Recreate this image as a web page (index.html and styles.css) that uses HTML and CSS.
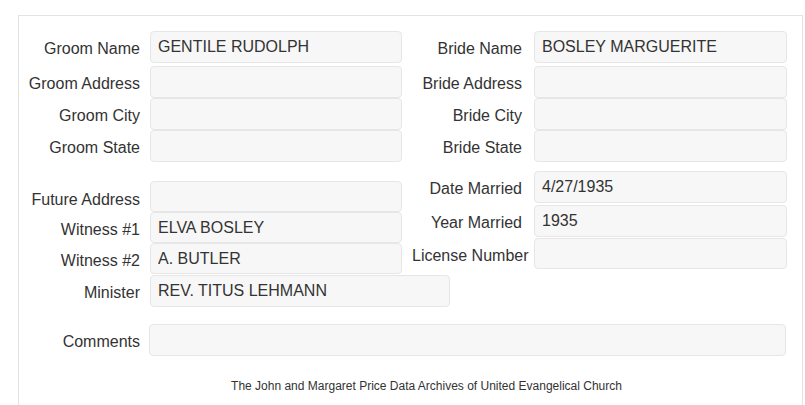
FILE: index.html
```html
<!DOCTYPE html>
<html lang="en">
<head>
    <meta charset="UTF-8">
    <title>Marriage Record</title>
    <link rel="stylesheet" href="styles.css">
</head>
<body>
    <div class="panel">
        <div class="top-grid">
            <div class="field first">
                <label for="groomName">Groom Name</label>
                <input type="text" id="groomName" value="GENTILE RUDOLPH" readonly>
            </div>
            <div class="field first right">
                <label for="brideName">Bride Name</label>
                <input type="text" id="brideName" value="BOSLEY MARGUERITE" readonly>
            </div>
            <div class="field">
                <label for="groomAddress">Groom Address</label>
                <input type="text" id="groomAddress" value="" readonly>
            </div>
            <div class="field right">
                <label for="brideAddress">Bride Address</label>
                <input type="text" id="brideAddress" value="" readonly>
            </div>
            <div class="field">
                <label for="groomCity">Groom City</label>
                <input type="text" id="groomCity" value="" readonly>
            </div>
            <div class="field right">
                <label for="brideCity">Bride City</label>
                <input type="text" id="brideCity" value="" readonly>
            </div>
            <div class="field">
                <label for="groomState">Groom State</label>
                <input type="text" id="groomState" value="" readonly>
            </div>
            <div class="field right">
                <label for="brideState">Bride State</label>
                <input type="text" id="brideState" value="" readonly>
            </div>
        </div>

        <div class="bottom-grid">
            <div class="left-col">
                <div class="field short">
                    <label for="futureAddress" class="low">Future Address</label>
                    <input type="text" id="futureAddress" value="" readonly>
                </div>
                <div class="field short">
                    <label for="witness1">Witness #1</label>
                    <input type="text" id="witness1" value="ELVA BOSLEY" readonly>
                </div>
                <div class="field short">
                    <label for="witness2">Witness #2</label>
                    <input type="text" id="witness2" value="A. BUTLER" readonly>
                </div>
                <div class="field minister">
                    <label for="minister">Minister</label>
                    <input type="text" id="minister" value="REV. TITUS LEHMANN" readonly>
                </div>
            </div>
            <div class="right-col">
                <div class="field right date">
                    <label for="dateMarried">Date Married</label>
                    <input type="text" id="dateMarried" value="4/27/1935" readonly>
                </div>
                <div class="field right year">
                    <label for="yearMarried">Year Married</label>
                    <input type="text" id="yearMarried" value="1935" readonly>
                </div>
                <div class="field right license">
                    <label for="licenseNumber">License Number</label>
                    <input type="text" id="licenseNumber" value="" readonly>
                </div>
            </div>
        </div>

        <div class="field comments">
            <label for="comments">Comments</label>
            <input type="text" id="comments" value="" readonly>
        </div>

        <p class="footer">The John and Margaret Price Data Archives of United Evangelical Church</p>
    </div>
</body>
</html>
```

FILE: styles.css
```css
body {
    margin: 0;
    font-family: "Liberation Sans", Arial, sans-serif;
    color: #333;
}
.panel {
    margin: 15px 0 0 18px;
    width: 785px;
    height: 390px;
    border: 1px solid #e3e3e3;
    border-bottom: none;
    padding-top: 15px;
    box-sizing: border-box;
}
.top-grid {
    display: grid;
    grid-template-columns: 383px 1fr;
}
.field {
    display: flex;
    align-items: center;
    height: 32px;
}
.field.first {
    margin-bottom: 3px;
}
label {
    flex: 0 0 121px;
    min-width: 0;
    text-align: right;
    margin-right: 10px;
    font-size: 16px;
    white-space: nowrap;
    padding-top: 4px;
}
input {
    width: 252px;
    height: 32px;
    box-sizing: border-box;
    padding: 0 7px;
    border: 1px solid #e6e6e6;
    border-radius: 4px;
    background-color: #f7f7f7;
    font-family: "Liberation Sans", Arial, sans-serif;
    font-size: 16px;
    color: #333;
    outline: none;
}
.field.right label {
    flex: 0 0 110px;
    margin-left: 10px;
    margin-right: 12px;
}
.field.right input {
    width: 253px;
}
.bottom-grid {
    display: grid;
    grid-template-columns: 383px 1fr;
    align-items: start;
}
.left-col {
    padding-top: 19px;
}
.field.short {
    height: 31px;
}
.field.short input {
    height: 31px;
}
label.low {
    padding-top: 7px;
}
.field.minister {
    margin-top: 1px;
}
.field.minister input {
    flex: 0 0 300px;
    width: 300px;
}
.right-col {
    padding-top: 9px;
}
.field.year {
    margin-top: 2px;
}
.field.license {
    margin-top: 1px;
    height: 31px;
}
.field.license input {
    height: 31px;
}
.field.comments {
    margin-top: 17px;
}
.field.comments label {
    margin-right: 9px;
}
.field.comments input {
    width: 637px;
}
.footer {
    margin: 23px 0 0 32px;
    font-size: 12px;
    text-align: center;
}
```
